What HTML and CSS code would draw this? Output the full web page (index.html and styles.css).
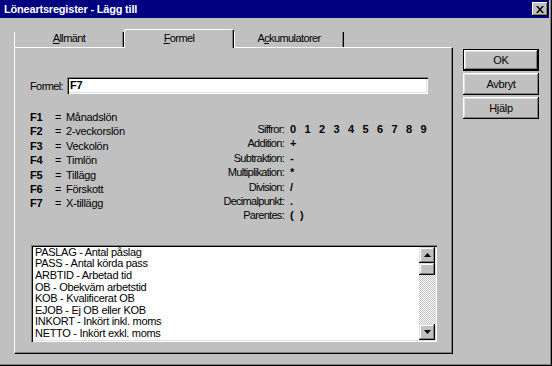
FILE: index.html
```html
<!DOCTYPE html>
<html lang="sv">
<head>
<meta charset="utf-8">
<title>Löneartsregister - Lägg till</title>
<link rel="stylesheet" href="styles.css">
</head>
<body>
<div class="window">
  <div class="frame">
    <div class="titlebar">
      <span class="title">Löneartsregister - Lägg till</span>
      <span class="close">
        <svg width="8" height="7" viewBox="0 0 8 7"><path d="M0 0h2l2 2.5L6 0h2L5 3.5 8 7H6L4 4.5 2 7H0l3-3.5z" fill="#000"/></svg>
      </span>
    </div>
    <div class="body">
      <div class="tabctl">
        <div class="tabrow">
          <div class="tab"><u>A</u>llmänt</div>
          <div class="tab active"><u>F</u>ormel</div>
          <div class="tab">A<u>c</u>kumulatorer</div>
        </div>
        <div class="panel">
          <div class="formel-row">
            <span class="flabel">Formel:</span>
            <div class="edit">F7</div>
          </div>
          <div class="legend">
            <div class="fkeys">
              <b>F1</b><span>=</span><span>Månadslön</span>
              <b>F2</b><span>=</span><span>2-veckorslön</span>
              <b>F3</b><span>=</span><span>Veckolön</span>
              <b>F4</b><span>=</span><span>Timlön</span>
              <b>F5</b><span>=</span><span>Tillägg</span>
              <b>F6</b><span>=</span><span>Förskott</span>
              <b>F7</b><span>=</span><span>X-tillägg</span>
            </div>
            <div class="ops">
              <span class="ol">Siffror:</span><b class="digits"><i>0</i><i>1</i><i>2</i><i>3</i><i>4</i><i>5</i><i>6</i><i>7</i><i>8</i><i>9</i></b>
              <span class="ol">Addition:</span><b>+</b>
              <span class="ol">Subtraktion:</span><b>-</b>
              <span class="ol">Multiplikation:</span><b>*</b>
              <span class="ol">Division:</span><b>/</b>
              <span class="ol">Decimalpunkt:</span><b>.</b>
              <span class="ol">Parentes:</span><b class="parens"><i>(</i><i>)</i></b>
            </div>
          </div>
          <div class="listbox">
            <ul class="items">
              <li>PASLAG - Antal påslag</li>
              <li>PASS - Antal körda pass</li>
              <li>ARBTID - Arbetad tid</li>
              <li>OB - Obekväm arbetstid</li>
              <li>KOB - Kvalificerat OB</li>
              <li>EJOB - Ej OB eller KOB</li>
              <li>INKORT - Inkört inkl. moms</li>
              <li>NETTO - Inkört exkl. moms</li>
            </ul>
            <div class="scrollbar">
              <div class="sbtn"><svg width="7" height="4" viewBox="0 0 7 4"><path d="M3.5 0L7 4H0z" fill="#000"/></svg></div>
              <div class="thumb"></div>
              <div class="track"></div>
              <div class="sbtn"><svg width="7" height="4" viewBox="0 0 7 4"><path d="M0 0h7L3.5 4z" fill="#000"/></svg></div>
            </div>
          </div>
        </div>
      </div>
      <div class="buttons">
        <div class="btn default">OK</div>
        <div class="btn">Avbryt</div>
        <div class="btn">Hjälp</div>
      </div>
    </div>
  </div>
</div>
</body>
</html>
```
FILE: styles.css
```css
html, body {
  margin: 0;
  padding: 0;
  background: #c0c0c0;
}
body {
  font-family: "Liberation Sans", Arial, sans-serif;
  font-size: 11px;
  letter-spacing: -0.3px;
  color: #000;
}
.window {
  width: 552px;
  height: 366px;
  box-sizing: border-box;
  border-right: 1px solid #000;
  border-bottom: 1px solid #000;
}
.frame {
  height: 100%;
  box-sizing: border-box;
  border-right: 1px solid #808080;
  border-bottom: 1px solid #808080;
  padding-right: 1px;
  display: flex;
  flex-direction: column;
}
.titlebar {
  height: 18px;
  flex: none;
  background: #000080;
  color: #fff;
  display: flex;
  align-items: center;
  justify-content: space-between;
  padding: 0 1px 0 4px;
}
.title {
  font-weight: bold;
  letter-spacing: -0.2px;
}
.close {
  width: 16px;
  height: 14px;
  box-sizing: border-box;
  background: #c0c0c0;
  display: flex;
  align-items: center;
  justify-content: center;
  box-shadow: inset -1px -1px #000, inset 1px 1px #fff, inset -2px -2px #808080;
}
.body {
  flex: 1;
  display: flex;
  padding: 11px 0 0 14px;
}
.tabctl {
  width: 439px;
  display: flex;
  flex-direction: column;
}
.tabrow {
  height: 18px;
  display: flex;
  align-items: flex-end;
}
.tab {
  width: 110px;
  height: 15px;
  box-sizing: border-box;
  border-left: 1px solid #fff;
  border-right: 1px solid #000;
  box-shadow: inset -1px 0 #808080;
  text-align: center;
  line-height: 13px;
  letter-spacing: -0.6px;
}
.tab.active {
  height: 19px;
  margin-bottom: -1px;
  border-top: 1px solid #fff;
  border-top-left-radius: 2px;
  border-top-right-radius: 2px;
  background: #c0c0c0;
  position: relative;
  z-index: 1;
  line-height: 16px;
}
.panel {
  height: 307px;
  box-sizing: border-box;
  border-top: 1px solid #fff;
  border-left: 1px solid #fff;
  border-right: 1px solid #000;
  border-bottom: 1px solid #000;
  box-shadow: inset -1px -1px #808080;
  padding: 29px 15px 0 15px;
  display: flex;
  flex-direction: column;
}
.formel-row {
  display: flex;
  align-items: center;
}
.flabel {
  width: 37px;
  letter-spacing: -0.6px;
}
.edit {
  width: 361px;
  height: 17px;
  box-sizing: border-box;
  background: #fff;
  box-shadow: inset 1px 1px #808080, inset 2px 2px #000, inset -1px -1px #fff, inset -2px -2px #dfdfdf;
  padding-left: 3px;
  font-weight: bold;
  line-height: 17px;
}
.legend {
  display: flex;
  margin-top: 16px;
}
.fkeys {
  width: 160px;
  display: grid;
  grid-template-columns: 25px 11px auto;
  grid-auto-rows: 14.4px;
  line-height: 14.4px;
}
.ops {
  margin-top: 12px;
  display: grid;
  grid-template-columns: 94px auto;
  column-gap: 6px;
  grid-auto-rows: 14.4px;
  line-height: 14.4px;
}
.ol {
  text-align: right;
  letter-spacing: -0.7px;
}
.digits, .parens {
  display: flex;
}
.digits i {
  font-style: normal;
  width: 14.5px;
}
.parens i {
  font-style: normal;
  width: 10px;
}
.listbox {
  margin-top: 22px;
  margin-left: 1px;
  width: 406px;
  height: 97px;
  box-sizing: border-box;
  background: #fff;
  box-shadow: inset 1px 1px #808080, inset 2px 2px #000, inset -1px -1px #fff, inset -2px -2px #dfdfdf;
  padding: 2px;
  display: flex;
}
.items {
  flex: 1;
  margin: 0;
  padding: 0 0 0 2px;
  list-style: none;
  overflow: hidden;
  line-height: 11.6px;
}
.scrollbar {
  width: 16px;
  display: flex;
  flex-direction: column;
}
.sbtn, .thumb {
  height: 16px;
  box-sizing: border-box;
  background: #c0c0c0;
  box-shadow: inset -1px -1px #000, inset 1px 1px #dfdfdf, inset -2px -2px #808080, inset 2px 2px #fff;
  display: flex;
  align-items: center;
  justify-content: center;
}
.thumb {
  height: 12px;
}
.track {
  flex: 1;
  background: repeating-conic-gradient(#fff 0 25%, #c0c0c0 0 50%) 0 0 / 2px 2px;
}
.buttons {
  margin-left: 10px;
  margin-top: 20px;
  width: 76px;
  display: flex;
  flex-direction: column;
  gap: 2px;
}
.btn {
  height: 22px;
  box-sizing: border-box;
  background: #c0c0c0;
  box-shadow: inset -1px -1px #000, inset 1px 1px #fff, inset -2px -2px #808080, inset 2px 2px #dfdfdf;
  display: flex;
  align-items: center;
  justify-content: center;
}
.btn.default {
  border: 1px solid #000;
}
```
